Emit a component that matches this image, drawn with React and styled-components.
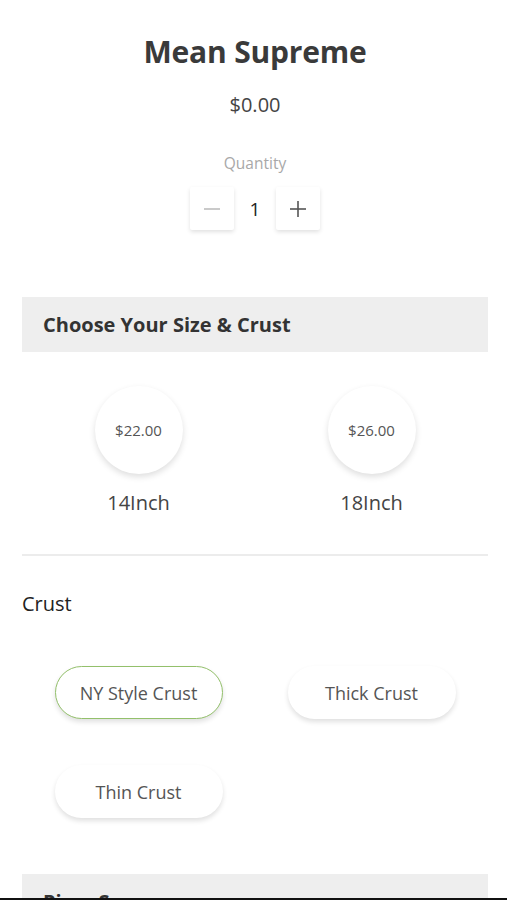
import React, { useState } from 'react'
import styled, { createGlobalStyle } from 'styled-components'

const GlobalStyle = createGlobalStyle`
  html, body {
    margin: 0;
    padding: 0;
    background: #fff;
    font-family: "Open Sans", "Noto Sans", sans-serif;
  }
`

const Page = styled.div`
  padding: 0 19px 0 22px;
  display: flex;
  flex-direction: column;
`

const Top = styled.div`
  display: flex;
  flex-direction: column;
  align-items: center;
  padding-top: 31px;
`

const Title = styled.h1`
  margin: 0;
  font-size: 30px;
  line-height: 42px;
  font-weight: 700;
  color: #3a3a3a;
  letter-spacing: -0.2px;
`

const Price = styled.div`
  margin-top: 18px;
  font-size: 20px;
  line-height: 28px;
  color: #444;
`

const QtyLabel = styled.div`
  margin-top: 33px;
  font-size: 15.5px;
  line-height: 22px;
  color: #a8a8a8;
`

const QtyRow = styled.div`
  margin-top: 13px;
  display: flex;
  align-items: center;
`

const QtyButton = styled.button`
  width: 44px;
  height: 43px;
  border: none;
  background: #fff;
  box-shadow: 0 2px 4px rgba(0, 0, 0, 0.12);
  border-radius: 2px;
  display: flex;
  align-items: center;
  justify-content: center;
  padding: 0;
  cursor: pointer;
`

const QtyValue = styled.div`
  width: 42px;
  text-align: center;
  font-size: 19px;
  color: #222;
`

const SectionHeader = styled.div`
  margin-top: ${p => (p.$flush ? '0' : '67px')};
  height: 55px;
  background: #eeeeee;
  display: flex;
  align-items: center;
  padding-left: 21px;
  font-size: 20px;
  font-weight: 700;
  color: #333;
`

const SizeGrid = styled.div`
  display: grid;
  grid-template-columns: 1fr 1fr;
  padding: 34px 0 37px;
  border-bottom: 2px solid #ececec;
`

const SizeOption = styled.div`
  display: flex;
  flex-direction: column;
  align-items: center;
`

const Circle = styled.div`
  width: 88px;
  height: 88px;
  border-radius: 50%;
  background: #fff;
  box-shadow: 0 3px 6px rgba(0, 0, 0, 0.13);
  display: flex;
  align-items: center;
  justify-content: center;
  font-size: 15px;
  color: #555;
`

const SizeLabel = styled.div`
  margin-top: 15px;
  font-size: 20px;
  line-height: 28px;
  color: #444;
`

const GroupTitle = styled.div`
  margin-top: 35px;
  font-size: 20px;
  line-height: 26px;
  color: #222;
`

const PillGrid = styled.div`
  display: grid;
  grid-template-columns: 1fr 1fr;
  row-gap: 46px;
  padding: 49px 0 56px;
  justify-items: center;
`

const Pill = styled.button`
  width: 168px;
  height: 53px;
  border-radius: 27px;
  background: #fff;
  border: ${p => (p.$active ? '1.5px solid #93c06b' : '1.5px solid transparent')};
  box-shadow: 0 3px 5px rgba(0, 0, 0, 0.12);
  font-family: inherit;
  font-size: 18px;
  color: #555;
  cursor: pointer;
`

const BottomEdge = styled.div`
  position: fixed;
  left: 0;
  right: 0;
  bottom: 0;
  height: 2px;
  background: #111;
`

const Minus = () => (
  <svg width="18" height="18" viewBox="0 0 18 18">
    <line x1="1" y1="9" x2="17" y2="9" stroke="#bdbdbd" strokeWidth="1.6" />
  </svg>
)

const Plus = () => (
  <svg width="18" height="18" viewBox="0 0 18 18">
    <line x1="1" y1="9" x2="17" y2="9" stroke="#555" strokeWidth="1.6" />
    <line x1="9" y1="1" x2="9" y2="17" stroke="#555" strokeWidth="1.6" />
  </svg>
)

const sizes = [
  { price: '$22.00', label: '14Inch' },
  { price: '$26.00', label: '18Inch' },
]

const crusts = ['NY Style Crust', 'Thick Crust', 'Thin Crust']

function App() {
  const [qty, setQty] = useState(1)
  const [crust, setCrust] = useState('NY Style Crust')

  return (
    <>
      <GlobalStyle />
      <Page>
        <Top>
          <Title>Mean Supreme</Title>
          <Price>$0.00</Price>
          <QtyLabel>Quantity</QtyLabel>
          <QtyRow>
            <QtyButton onClick={() => setQty(Math.max(1, qty - 1))}><Minus /></QtyButton>
            <QtyValue>{qty}</QtyValue>
            <QtyButton onClick={() => setQty(qty + 1)}><Plus /></QtyButton>
          </QtyRow>
        </Top>

        <SectionHeader>Choose Your Size &amp; Crust</SectionHeader>

        <SizeGrid>
          {sizes.map(s => (
            <SizeOption key={s.label}>
              <Circle>{s.price}</Circle>
              <SizeLabel>{s.label}</SizeLabel>
            </SizeOption>
          ))}
        </SizeGrid>

        <GroupTitle>Crust</GroupTitle>
        <PillGrid>
          {crusts.map(c => (
            <Pill key={c} $active={crust === c} onClick={() => setCrust(c)}>{c}</Pill>
          ))}
        </PillGrid>

        <SectionHeader $flush>Pizza Sauces</SectionHeader>
        <div style={{ height: 200 }} />
      </Page>
      <BottomEdge />
    </>
  )
}

export default App
